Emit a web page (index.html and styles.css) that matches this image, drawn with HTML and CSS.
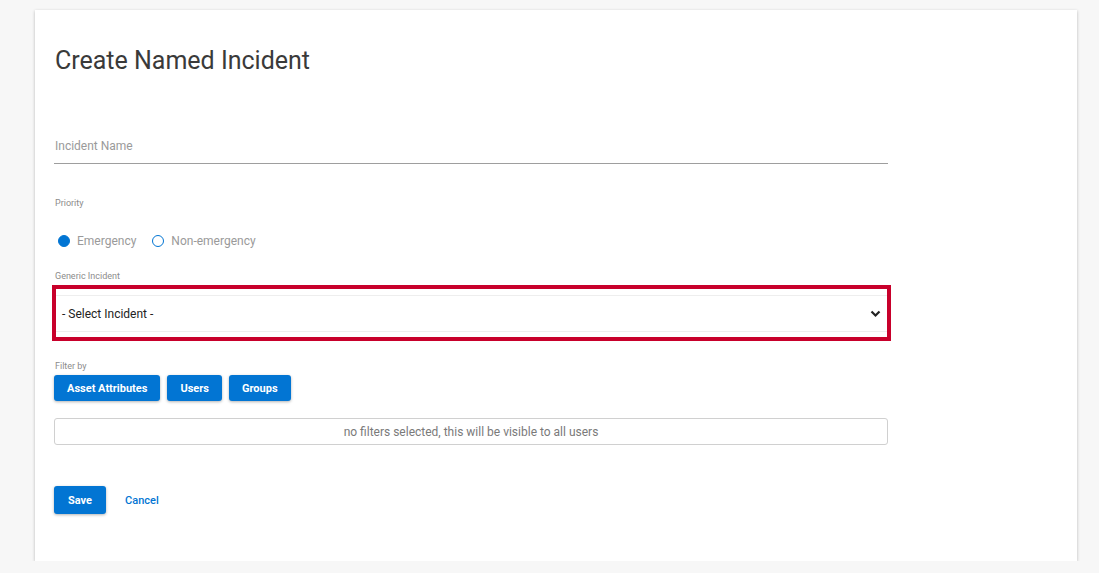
FILE: index.html
```html
<!DOCTYPE html>
<html lang="en">
<head>
  <meta charset="UTF-8">
  <meta name="viewport" content="width=device-width, initial-scale=1.0">
  <title>Create Named Incident</title>
  <link rel="stylesheet" href="styles.css">
</head>
<body>
  <div class="card">
    <h1>Create Named Incident</h1>

    <div class="form">
      <div class="field-name">
        <input type="text" class="text-input" placeholder="Incident Name">
      </div>

      <label class="small-label priority-label">Priority</label>
      <div class="radios">
        <label class="radio"><span class="dot checked"></span>Emergency</label>
        <label class="radio"><span class="dot"></span>Non-emergency</label>
      </div>

      <label class="small-label generic-label">Generic Incident</label>
      <div class="highlight">
        <div class="select">
          <span>- Select Incident -</span>
          <svg width="11" height="8" viewBox="0 0 11 8"><path d="M1.5 1.5 L5.5 5.5 L9.5 1.5" fill="none" stroke="#222" stroke-width="2.2"/></svg>
        </div>
      </div>

      <label class="small-label filter-label">Filter by</label>
      <div class="filter-buttons">
        <button class="btn">Asset Attributes</button>
        <button class="btn">Users</button>
        <button class="btn">Groups</button>
      </div>

      <div class="filter-box">no filters selected, this will be visible to all users</div>

      <div class="actions">
        <button class="btn save">Save</button>
        <a class="cancel" href="#">Cancel</a>
      </div>
    </div>
  </div>
</body>
</html>
```

FILE: styles.css
```css
:root {
  --blue: #0275d3;
  --grey-text: #9a9a9a;
  --red: #c8002b;
}
body {
  margin: 0;
  background: #f7f7f7;
  font-family: Roboto, "Liberation Sans", Arial, sans-serif;
  color: #333;
}
.card {
  margin: 10px 22px 0 35px;
  height: 551px;
  box-sizing: border-box;
  background: #fff;
  padding: 30px 19px 0 19px;
  box-shadow: 0 1px 3px rgba(0,0,0,0.25);
}
h1 {
  margin: 1px 0 0 1px;
  font-size: 25px;
  font-weight: 400;
  color: #3a3a3a;
  line-height: 40px;
}
.form {
  width: 834px;
}
.field-name {
  margin-top: 47px;
  border-bottom: 1px solid #9e9e9e;
}
.text-input {
  width: 100%;
  border: none;
  outline: none;
  padding: 0 0 0 1px;
  height: 35px;
  font-family: inherit;
  font-size: 12px;
  color: #333;
  display: block;
}
.text-input::placeholder {
  color: var(--grey-text);
}
.small-label {
  display: block;
  font-size: 9px;
  color: #8c8c8c;
  padding-left: 1px;
}
.priority-label {
  margin-top: 33px;
  line-height: 12px;
}
.radios {
  display: flex;
  gap: 12px;
  margin-top: 24px;
  height: 16px;
  align-items: center;
}
.radio {
  display: flex;
  align-items: center;
  font-size: 12px;
  color: var(--grey-text);
}
.dot {
  width: 10px;
  height: 10px;
  border: 1.5px solid var(--blue);
  border-radius: 50%;
  margin: 0 7px 0 4px;
}
.dot.checked {
  background: var(--blue);
}
.generic-label {
  margin-top: 21px;
  line-height: 12px;
}
.highlight {
  margin: 3px -3px 0 -2px;
  border: 4px solid var(--red);
  padding: 6px 0 5px 0;
}
.select {
  display: flex;
  justify-content: space-between;
  align-items: center;
  height: 35px;
  border-top: 1px solid #eee;
  border-bottom: 1px solid #eee;
  padding: 0 6px 0 6px;
  font-size: 12px;
  color: #222;
}
.filter-label {
  margin-top: 20px;
  line-height: 10px;
}
.filter-buttons {
  display: flex;
  gap: 7px;
  margin-top: 4px;
}
.btn {
  background: var(--blue);
  color: #fff;
  border: none;
  border-radius: 3px;
  font-family: inherit;
  font-weight: 700;
  font-size: 11px;
  height: 26px;
  padding: 0 13px;
  box-shadow: 0 1px 3px rgba(0,0,0,0.3);
}
.filter-box {
  margin-top: 17px;
  height: 27px;
  box-sizing: border-box;
  border: 1px solid #d0d0d0;
  border-radius: 3px;
  display: flex;
  align-items: center;
  justify-content: center;
  font-size: 12px;
  color: #7a7a7a;
}
.actions {
  display: flex;
  align-items: center;
  gap: 19px;
  margin-top: 41px;
}
.save {
  height: 28px;
  padding: 0 14px;
}
.cancel {
  color: var(--blue);
  text-decoration: none;
  font-size: 11px;
  font-weight: 500;
}
```
